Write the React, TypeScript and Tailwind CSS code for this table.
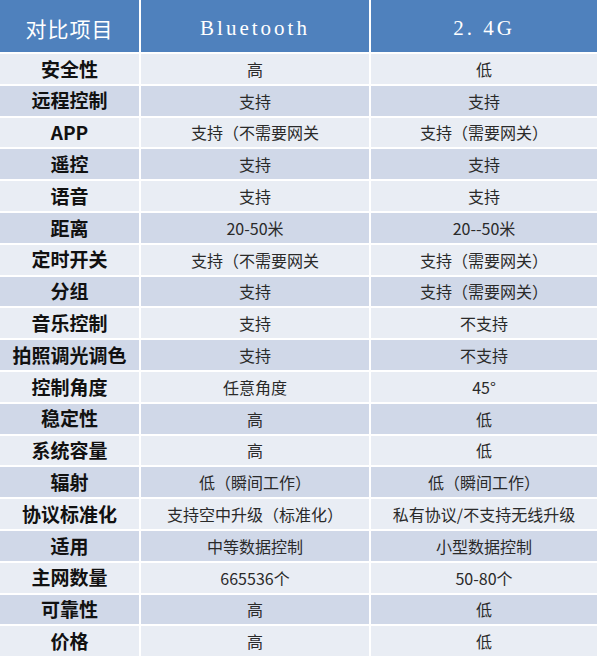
const rows: [string, string, string][] = [
  ["安全性", "高", "低"],
  ["远程控制", "支持", "支持"],
  ["APP", "支持（不需要网关", "支持（需要网关）"],
  ["遥控", "支持", "支持"],
  ["语音", "支持", "支持"],
  ["距离", "20-50米", "20--50米"],
  ["定时开关", "支持（不需要网关", "支持（需要网关）"],
  ["分组", "支持", "支持（需要网关）"],
  ["音乐控制", "支持", "不支持"],
  ["拍照调光调色", "支持", "不支持"],
  ["控制角度", "任意角度", "45°"],
  ["稳定性", "高", "低"],
  ["系统容量", "高", "低"],
  ["辐射", "低（瞬间工作）", "低（瞬间工作）"],
  ["协议标准化", "支持空中升级（标准化）", "私有协议/不支持无线升级"],
  ["适用", "中等数据控制", "小型数据控制"],
  ["主网数量", "665536个", "50-80个"],
  ["可靠性", "高", "低"],
  ["价格", "高", "低"],
];

const cjk = "font-['Noto_Sans_CJK_SC',sans-serif]";
const serif = "font-['Liberation_Serif','Noto_Sans_CJK_SC',serif]";

export default function App() {
  return (
    <div className="w-[600px] h-[660px] bg-white">
      <div className="w-[597px] grid grid-cols-[139px_228px_226px] gap-[2px] bg-white">
        <div className={`h-[52px] pt-[5px] bg-[#4f81bd] flex items-center justify-center text-white text-[21px] tracking-[1px] ${cjk}`}>
          对比项目
        </div>
        <div className={`h-[52px] pt-[5px] bg-[#4f81bd] flex items-center justify-center text-white text-[21px] tracking-[3px] ${serif}`}>
          Bluetooth
        </div>
        <div className={`h-[52px] pt-[5px] bg-[#4f81bd] flex items-center justify-center text-white text-[21px] tracking-[3px] ${serif}`}>
          2.&nbsp;4G
        </div>
        {rows.map(([label, bt, g], i) => {
          const bg = i % 2 === 0 ? "bg-[#e9edf4]" : "bg-[#d0d8e8]";
          return (
            <>
              <div key={label + "a"} className={`h-[29.8px] ${bg} flex items-center justify-center text-[19px] font-bold text-[#111] ${cjk}`}>
                {label}
              </div>
              <div key={label + "b"} className={`h-[29.8px] ${bg} flex items-center justify-center text-[16px] text-[#2a2a2a] ${cjk}`}>
                {bt}
              </div>
              <div key={label + "c"} className={`h-[29.8px] ${bg} flex items-center justify-center text-[16px] text-[#2a2a2a] ${cjk}`}>
                {g}
              </div>
            </>
          );
        })}
      </div>
    </div>
  );
}
